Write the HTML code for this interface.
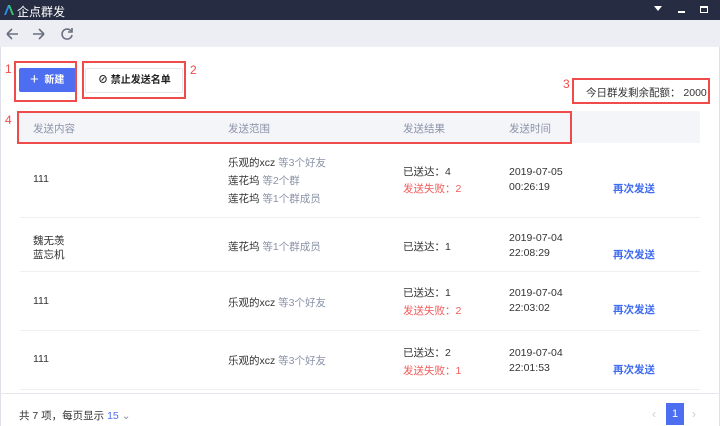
<!DOCTYPE html>
<html><head><meta charset="utf-8"><style>
*{margin:0;padding:0;box-sizing:border-box}
body{width:720px;height:426px;overflow:hidden;background:#fff;font-family:"Liberation Sans","Noto Sans CJK SC",sans-serif;font-size:10.5px;color:#333;position:relative}
.a{position:absolute;white-space:nowrap}
.rb{position:absolute;border:2px solid #f04b4b}
.rl{position:absolute;color:#f04b4b;font-size:12px}
.g{color:#8a93a8}
.red{color:#f25a5a}
.blue{color:#3f6cf0;font-weight:bold}
.hr{position:absolute;left:20px;width:680px;height:1px;background:#eef0f4}
</style></head><body>
<div class="a" style="left:0;top:0;width:720px;height:20px;background:#262c42"></div>
<svg class="a" style="left:3px;top:4px" width="12" height="12" viewBox="0 0 12 12"><path d="M1 11L5 1h2L3 11z" fill="#2a8cf0"/><path d="M5 1h2l4 10H9z" fill="#3cc46a"/></svg>
<div class="a" style="left:17px;top:3px;color:#fff;font-size:12px">企点群发</div>
<svg class="a" style="left:654px;top:6px" width="8" height="6"><path d="M0 0h8L4 5z" fill="#fff"/></svg>
<div class="a" style="left:678px;top:11px;width:7px;height:1.5px;background:#fff"></div>
<div class="a" style="left:700px;top:6px;width:8px;height:7px;border:1.5px solid #fff;border-top-width:2px"></div>
<div class="a" style="left:0;top:20px;width:720px;height:27px;background:#eceef3"></div>
<svg class="a" style="left:5px;top:27px" width="70" height="14" fill="none" stroke="#6a7080" stroke-width="1.6"><path d="M2 7h11M2 7l5-5M2 7l5 5"/><path d="M28 7h11M39 7l-5-5M39 7l-5 5"/><path d="M66 4a5 5 0 1 0 1 4"/><path d="M67 1v4h-4"/></svg>
<div class="a" style="left:0;top:47px;width:1px;height:379px;background:#dde0e6"></div>
<div class="a" style="left:719px;top:47px;width:1px;height:379px;background:#dde0e6"></div>

<div class="rl" style="left:5px;top:62px">1</div>
<div class="a" style="left:19px;top:68px;width:58px;height:24px;background:#4e6ef2;border-radius:2px;color:#fff;font-weight:bold;font-size:10px;line-height:24px;padding-left:11px"><span style="font-size:15px;font-weight:normal;vertical-align:-1px">+</span>&nbsp; 新建</div>
<div class="rb" style="left:14px;top:61px;width:63px;height:41px"></div>
<div class="a" style="left:85px;top:68px;width:98px;height:25px;border:1px solid #e4e6ec;border-radius:2px;font-weight:bold;font-size:10px;line-height:23px;padding-left:12px;color:#222">⊘ 禁止发送名单</div>
<div class="rb" style="left:82px;top:61px;width:104px;height:38px"></div>
<div class="rl" style="left:190px;top:63px">2</div>

<div class="rl" style="left:563px;top:77px">3</div>
<div class="rb" style="left:572px;top:78px;width:138px;height:26px"></div>
<div class="a" style="left:586px;top:85px;font-size:10.5px">今日群发剩余配额： 2000</div>

<div class="rl" style="left:5px;top:113px">4</div>
<div class="a" style="left:18px;top:111px;width:682px;height:32px;background:#f4f5f9"></div>
<div class="rb" style="left:17px;top:111px;width:555px;height:33px"></div>
<div class="a g" style="left:33px;top:121px">发送内容</div>
<div class="a g" style="left:228px;top:121px">发送范围</div>
<div class="a g" style="left:403px;top:121px">发送结果</div>
<div class="a g" style="left:509px;top:121px">发送时间</div>

<div class="a" style="left:33px;top:173px">111</div>
<div class="a" style="left:228px;top:155px">乐观的xcz <span class="g">等3个好友</span></div>
<div class="a" style="left:228px;top:173px">莲花坞 <span class="g">等2个群</span></div>
<div class="a" style="left:228px;top:191px">莲花坞 <span class="g">等1个群成员</span></div>
<div class="a" style="left:403px;top:164px">已送达：4</div>
<div class="a red" style="left:403px;top:181px">发送失败：2</div>
<div class="a" style="left:509px;top:166px">2019-07-05</div>
<div class="a" style="left:509px;top:181px">00:26:19</div>
<div class="a blue" style="left:613px;top:181px">再次发送</div>
<div class="hr" style="top:217px"></div>

<div class="a" style="left:33px;top:233px">魏无羡</div>
<div class="a" style="left:33px;top:247px">蓝忘机</div>
<div class="a" style="left:228px;top:239px">莲花坞 <span class="g">等1个群成员</span></div>
<div class="a" style="left:403px;top:239px">已送达：1</div>
<div class="a" style="left:509px;top:232px">2019-07-04</div>
<div class="a" style="left:509px;top:247px">22:08:29</div>
<div class="a blue" style="left:613px;top:247px">再次发送</div>
<div class="hr" style="top:271px"></div>

<div class="a" style="left:33px;top:295px">111</div>
<div class="a" style="left:228px;top:295px">乐观的xcz <span class="g">等3个好友</span></div>
<div class="a" style="left:403px;top:285px">已送达：1</div>
<div class="a red" style="left:403px;top:303px">发送失败：2</div>
<div class="a" style="left:509px;top:287px">2019-07-04</div>
<div class="a" style="left:509px;top:302px">22:03:02</div>
<div class="a blue" style="left:613px;top:302px">再次发送</div>
<div class="hr" style="top:330px"></div>

<div class="a" style="left:33px;top:353px">111</div>
<div class="a" style="left:228px;top:353px">乐观的xcz <span class="g">等3个好友</span></div>
<div class="a" style="left:403px;top:345px">已送达：2</div>
<div class="a red" style="left:403px;top:363px">发送失败：1</div>
<div class="a" style="left:509px;top:347px">2019-07-04</div>
<div class="a" style="left:509px;top:362px">22:01:53</div>
<div class="a blue" style="left:613px;top:362px">再次发送</div>
<div class="hr" style="top:389px"></div>
<div class="a" style="left:0;top:393px;width:720px;height:1px;background:#e6e8ee"></div>

<div class="a" style="left:19px;top:408px;font-size:10.5px">共 7 项，每页显示 <span style="color:#4e6ef2">15</span> <span style="color:#8a93a8">⌄</span></div>
<div class="a" style="left:652px;top:407px;color:#ccc;font-size:12px">‹</div>
<div class="a" style="left:666px;top:403px;width:18px;height:22px;background:#4e6ef2;color:#fff;text-align:center;line-height:22px;font-size:11px">1</div>
<div class="a" style="left:692px;top:407px;color:#ccc;font-size:12px">›</div>
</body></html>
